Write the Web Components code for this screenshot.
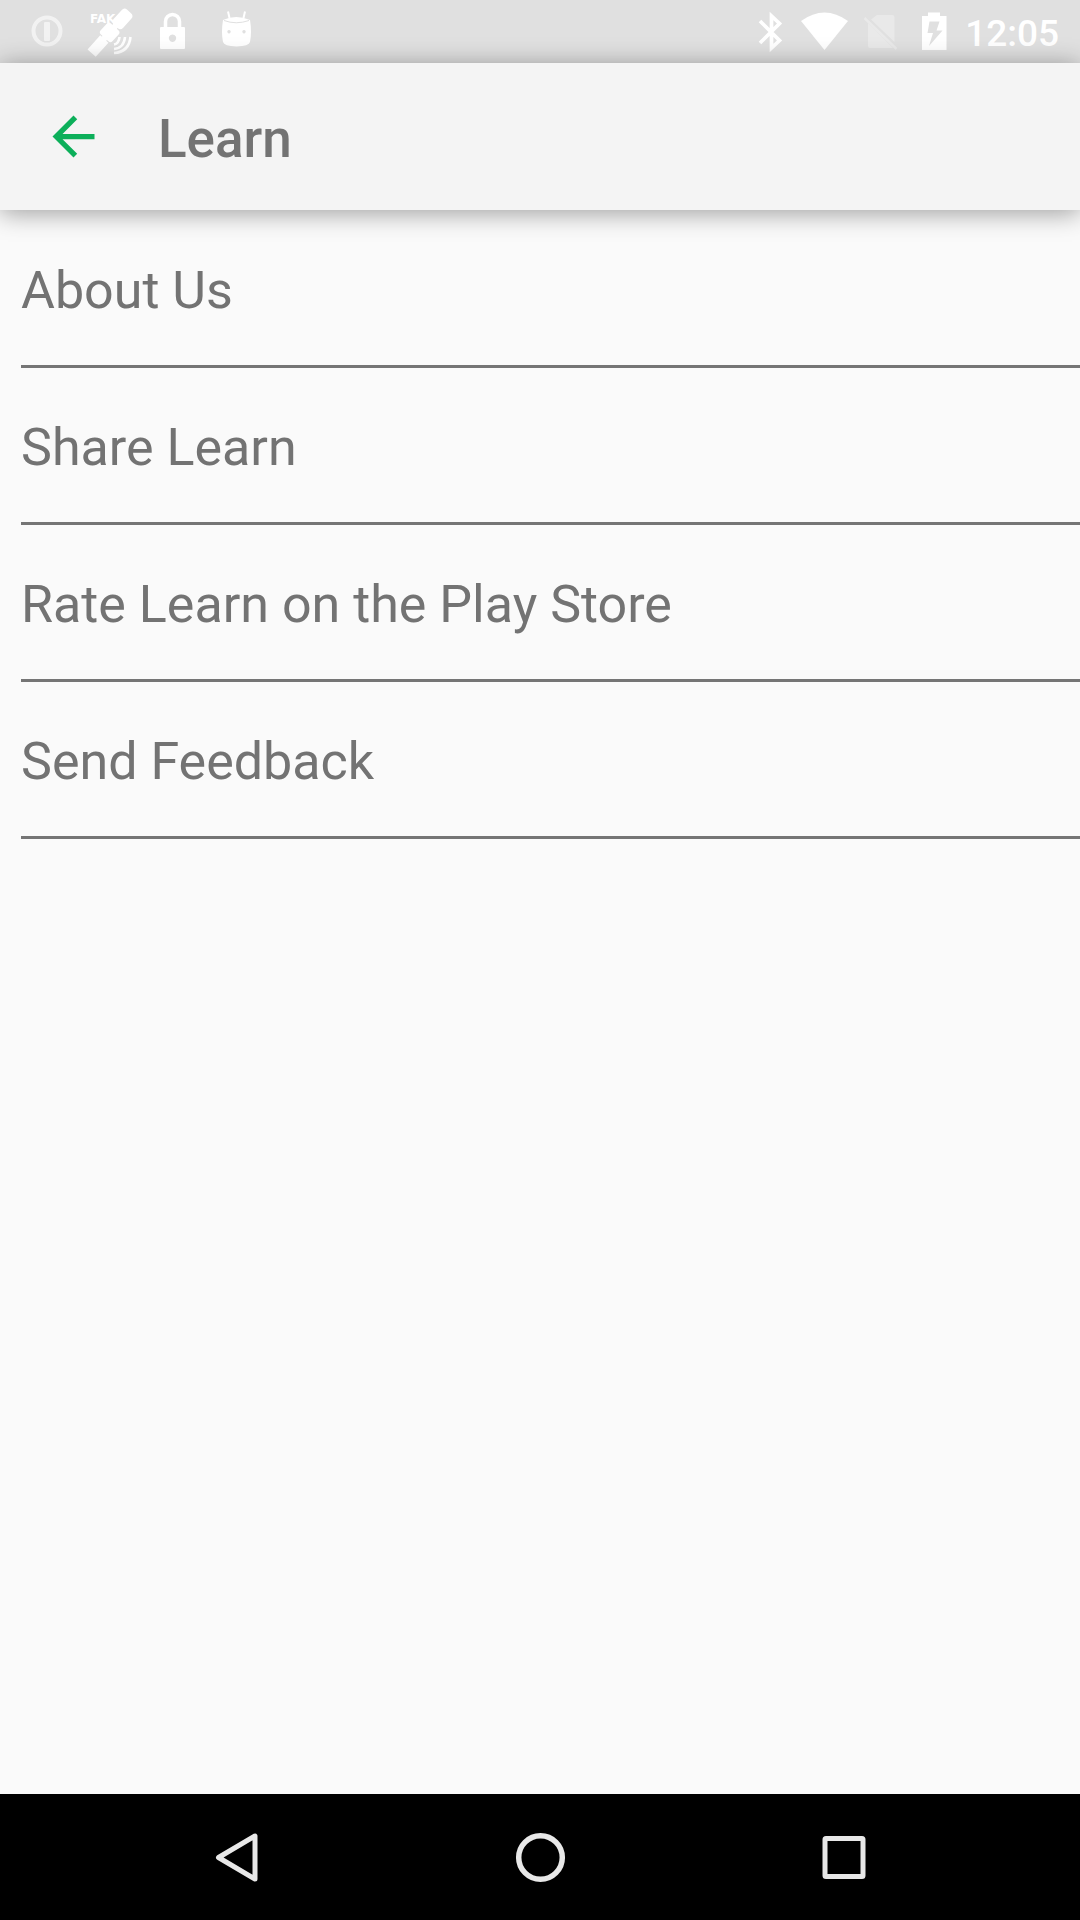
<!DOCTYPE html>
<html lang="en">
<head>
<meta charset="utf-8">
<meta name="viewport" content="width=device-width, initial-scale=1">
<title>Learn</title>
<style>
html, body { margin: 0; min-height: 100%; }
body { font-family: Roboto, "Noto Sans", sans-serif; background: #fafafa; color: #737373; }
</style>
</head>
<body>
<learn-screen>
  <status-bar slot="status" time="12:05"></status-bar>
  <app-bar slot="header">Learn</app-bar>
  <menu-list>
    <menu-row href="#about">About Us</menu-row>
    <menu-row href="#share">Share Learn</menu-row>
    <menu-row href="#rate">Rate Learn on the Play Store</menu-row>
    <menu-row href="#feedback">Send Feedback</menu-row>
  </menu-list>
  <nav-bar slot="footer"></nav-bar>
</learn-screen>
<script>
function define(name, markup, setup) {
  customElements.define(name, class extends HTMLElement {
    constructor() {
      super();
      this.attachShadow({ mode: "open" }).innerHTML = markup;
    }
    connectedCallback() {
      if (setup) setup(this, this.shadowRoot);
    }
  });
}

define("learn-screen", `
<style>
:host { display: flex; flex-direction: column; min-height: 100vh; overflow-x: clip; }
main { flex: 1; }
</style>
<slot name="status"></slot>
<slot name="header"></slot>
<main><slot></slot></main>
<slot name="footer"></slot>`);

define("status-bar", `
<style>
:host { display: flex; align-items: center; justify-content: space-between; height: 63px;
  padding: 0 21px 0 16px; background: #e0e0e0; color: #fff; }
div { display: flex; align-items: center; }
svg { display: block; height: 63px; fill: #fff; }
time { font-size: 37px; line-height: 43px; font-weight: 500; padding-top: 3px; margin-left: 4px; }
text { font: bold 12px "DejaVu Sans", sans-serif; }
</style>
<div>
  <svg width="63" viewBox="16 0 63 63" aria-hidden="true"><g opacity=".6"><circle cx="47" cy="31" r="13.5" fill="none" stroke="#fff" stroke-width="4"/><rect x="44" y="22" width="6" height="19" rx="1"/></g></svg>
  <svg width="63" viewBox="79 0 63 63" aria-hidden="true"><text x="90" y="23">FAK</text>
    <g transform="translate(110 32) rotate(-48)"><rect x="-28" y="-5" width="19" height="11"/><rect x="-11" y="-3" width="5" height="6"/><rect x="-8" y="-8" width="15" height="16" rx="3"/><rect x="6" y="-3" width="5" height="6"/><rect x="8" y="-6" width="20" height="13" rx="4"/></g>
    <g fill="none" stroke="#fff" stroke-width="2.600"><path d="M119.500 37Q119 43.500 114 44.500M125 37Q124 48 114 49M130.500 37Q129 52 114 53"/></g></svg>
  <svg width="63" viewBox="142 0 63 63" aria-hidden="true"><path fill-rule="evenodd" d="M161 27H184Q185 27 185 28V48Q185 49 184 49H161Q160 49 160 48V28Q160 27 161 27ZM172.500 34.500a3.700 3.700 0 1 0 .01 0Z"/><path d="M165.500 28V21.500a7 7 0 0 1 14 0V28" fill="none" stroke="#fff" stroke-width="3.500"/></svg>
  <svg width="63" viewBox="205 0 63 63" aria-hidden="true"><path fill-rule="evenodd" d="M223 20Q236 14 250 20Q252 32 250 42Q249 46 236.500 46.500Q224 46 223 42Q221 32 223 20ZM229 30a1.700 1.700 0 1 0 .01 0ZM244 30a1.700 1.700 0 1 0 .01 0Z"/><path d="M228 11.500L229.500 18M245 11.500L243.500 18" stroke="#fff" stroke-width="2"/><path d="M224 20.500Q236 25 249 20.500" fill="none" stroke="#e0e0e0" stroke-width="1"/></svg>
</div>
<div>
  <svg width="48" viewBox="747 0 48 63" aria-hidden="true"><path d="M760 21L779.500 40.500L771.500 48V16L779.500 23.500L760 43" fill="none" stroke="#fff" stroke-width="3.700"/></svg>
  <svg width="58" viewBox="795 0 58 63" aria-hidden="true"><path d="M801 21Q824.500 4 848 21L824.500 50Z"/></svg>
  <svg width="56" viewBox="853 0 56 63" aria-hidden="true"><g opacity=".3"><path d="M877 15H892Q894.500 15 894.500 17V42L871 19.500ZM868 23L893 48H870Q868 48 868 46Z"/><path d="M864.500 18L896.500 49" stroke="#fff" stroke-width="2.500"/></g></svg>
  <svg width="52" viewBox="909 0 52 63" aria-hidden="true"><path fill-rule="evenodd" d="M928 12.500H940V16H946.500V50H922V16H928ZM929.500 21.500L927.500 33H933L929 46L942.500 30.500H936.500L939.500 21.500Z"/></svg>
  <time></time>
</div>`, (el, root) => { root.querySelector("time").textContent = el.getAttribute("time"); });

define("app-bar", `
<style>
:host { display: block; position: relative; background: #f4f4f4;
  box-shadow: 0 3px 24px rgba(0,0,0,.38); }
header { display: flex; align-items: center; min-height: 147px; }
button { display: flex; align-items: center; justify-content: center; width: 147px; height: 147px;
  padding: 0; border: 0; background: none; }
svg { width: 63px; height: 63px; fill: #0caf5a; }
h1 { margin: 0; padding: 4px 0 0 11px; font-size: 53px; line-height: 62px; font-weight: 500; }
</style>
<header>
  <button type="button" aria-label="Back"><svg viewBox="0 0 24 24"><path d="M20 11H7.830l5.590-5.590L12 4l-8 8 8 8 1.410-1.410L7.830 13H20v-2z"/></svg></button>
  <h1><slot></slot></h1>
</header>`);

define("menu-list", `
<style>
:host { display: flex; flex-direction: column; padding: 1px 0 0 21px; }
</style>
<slot></slot>`, el => el.setAttribute("role", "list"));

define("menu-row", `
<style>
:host { display: block; border-bottom: 3px solid #757575; }
a { display: block; padding: 49px 0 43px; color: inherit; text-decoration: none;
  font-size: 52px; line-height: 62px; }
</style>
<a><slot></slot></a>`, (el, root) => {
  el.setAttribute("role", "listitem");
  root.querySelector("a").href = el.getAttribute("href");
});

define("nav-bar", `
<style>
:host { display: block; background: #000; }
nav { display: flex; justify-content: center; height: 126px; }
button { flex: 0 1 304px; display: flex; align-items: center; justify-content: center; padding: 0; border: 0; background: none; }
svg { width: 64px; height: 64px; fill: none; stroke: #e8e8e8; stroke-width: 5; stroke-linejoin: round; }
</style>
<nav aria-label="System">
  <button type="button" aria-label="Back"><svg viewBox="0 0 64 64"><path d="M14.500 32.500L51 11V54Z"/></svg></button>
  <button type="button" aria-label="Home"><svg viewBox="0 0 64 64"><circle cx="32.500" cy="32.500" r="21.800" stroke-width="5.500"/></svg></button>
  <button type="button" aria-label="Recents"><svg viewBox="0 0 64 64"><rect x="13" y="13.500" width="38" height="38" rx="1"/></svg></button>
</nav>`);
</script>
</body>
</html>
